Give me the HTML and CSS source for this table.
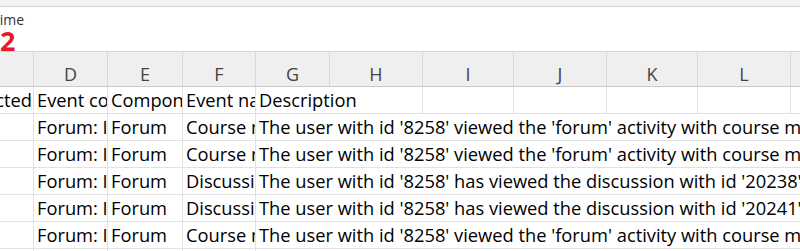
FILE: index.html
```html
<!DOCTYPE html>
<html lang="en">
<head>
  <meta charset="UTF-8">
  <title>Forum log</title>
  <link rel="stylesheet" href="styles.css">
</head>
<body>
  <div class="toolbar-edge"></div>

  <!-- field label with its step number -->
  <div class="namebar">
    <div class="field-label">Time</div>
    <div class="step">2</div>
  </div>

  <div class="sheet">
    <div class="col-head">C</div>
    <div class="col-head">D</div>
    <div class="col-head">E</div>
    <div class="col-head">F</div>
    <div class="col-head">G</div>
    <div class="col-head">H</div>
    <div class="col-head">I</div>
    <div class="col-head">J</div>
    <div class="col-head">K</div>
    <div class="col-head">L</div>
    <div class="col-head">M</div>

    <div class="cell right">Affected</div>
    <div class="cell">Event context</div>
    <div class="cell">Component</div>
    <div class="cell">Event name</div>
    <div class="cell span-2">Description</div>
    <div class="cell"></div>
    <div class="cell"></div>
    <div class="cell"></div>
    <div class="cell"></div>
    <div class="cell"></div>

    <div class="cell"></div>
    <div class="cell">Forum: Introductions</div>
    <div class="cell">Forum</div>
    <div class="cell">Course module viewed</div>
    <div class="cell span-rest">The user with id '8258' viewed the 'forum' activity with course module id '10417'.</div>

    <div class="cell"></div>
    <div class="cell">Forum: Introductions</div>
    <div class="cell">Forum</div>
    <div class="cell">Course module viewed</div>
    <div class="cell span-rest">The user with id '8258' viewed the 'forum' activity with course module id '10417'.</div>

    <div class="cell"></div>
    <div class="cell">Forum: Introductions</div>
    <div class="cell">Forum</div>
    <div class="cell">Discussion viewed</div>
    <div class="cell span-rest">The user with id '8258' has viewed the discussion with id '20238' in the forum with course module id '10417'.</div>

    <div class="cell"></div>
    <div class="cell">Forum: Introductions</div>
    <div class="cell">Forum</div>
    <div class="cell">Discussion viewed</div>
    <div class="cell span-rest">The user with id '8258' has viewed the discussion with id '20241' in the forum with course module id '10417'.</div>

    <div class="cell"></div>
    <div class="cell">Forum: Introductions</div>
    <div class="cell">Forum</div>
    <div class="cell">Course module viewed</div>
    <div class="cell span-rest">The user with id '8258' viewed the 'forum' activity with course module id '10417'.</div>

    <div class="cell"></div>
    <div class="cell"></div>
    <div class="cell"></div>
    <div class="cell"></div>
    <div class="cell span-rest"></div>
  </div>
</body>
</html>
```

FILE: styles.css
```css
body {
  margin: 0;
  padding: 0;
  background-color: #ffffff;
  font-family: "Open Sans", "Noto Sans", sans-serif;
  overflow: hidden;
}

.toolbar-edge {
  height: 6px;
  background-color: #f3f3f3;
  border-bottom: 1px solid #d5d5d5;
}

.namebar {
  height: 44px;
  overflow: hidden;
  border-bottom: 1px solid #d4d4d4;
}

.field-label {
  margin-left: -8px;
  margin-top: 5px;
  font-size: 14px;
  line-height: 16px;
  color: #333333;
}

.step {
  margin-top: 1px;
  font-size: 27px;
  line-height: 23px;
  font-weight: 700;
  color: #e8192c;
}

/* worksheet grid, column C is scrolled partly out of view */
.sheet {
  display: grid;
  grid-template-columns: 81px 74px 75px 73px 74px 93px 91px 93px 91px 93px 100px;
  grid-template-rows: 35px repeat(7, 27px);
  margin-left: -47px;
}

.col-head {
  box-sizing: border-box;
  background-color: #efefef;
  border-right: 1px solid #d8d8d8;
  border-bottom: 1px solid #c9c9c9;
  color: #444444;
  font-size: 18px;
  text-align: center;
  line-height: 34px;
  padding-top: 5px;
}

.cell {
  box-sizing: border-box;
  border-right: 1px solid #e1e1e1;
  border-bottom: 1px solid #e1e1e1;
  padding: 0 0 0 3px;
  font-size: 18.3px;
  line-height: 26px;
  color: #000000;
  white-space: nowrap;
  overflow: hidden;
}

.cell.right {
  text-align: right;
  padding: 0 1px 0 0;
}

.span-2 {
  grid-column: span 2;
}

.span-rest {
  grid-column: span 7;
}
```
